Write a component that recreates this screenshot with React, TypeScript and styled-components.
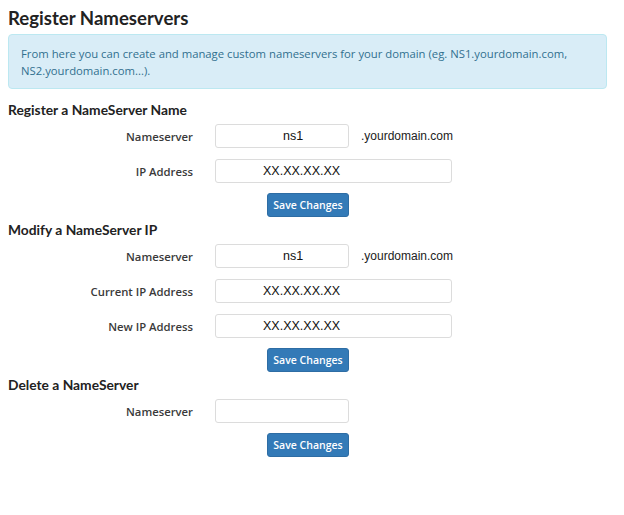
import styled, { createGlobalStyle } from "styled-components";

const GlobalStyle = createGlobalStyle`
  body {
    margin: 0;
    background: #fff;
    font-family: 'Open Sans', sans-serif;
  }
`;

const Page = styled.div`
  padding: 8px 17px 40px 8px;
`;

const Title = styled.h2`
  font-family: 'Lato', sans-serif;
  font-weight: 700;
  font-size: 18.6px;
  line-height: 20px;
  color: #222;
  margin: 0 0 6px;
`;

const Alert = styled.div`
  background: #d9edf7;
  border: 1px solid #bce8f1;
  border-radius: 4px;
  color: #31708f;
  font-size: 11.3px;
  line-height: 17px;
  padding: 10px 12px 9px;
`;

const Section = styled.section`
  margin-top: 13px;
  display: flex;
  flex-direction: column;
  gap: 11px;

  & + & {
    margin-top: 5px;
  }
`;

const SectionTitle = styled.h3`
  font-family: 'Lato', sans-serif;
  font-weight: 700;
  font-size: 13.8px;
  line-height: 16px;
  color: #222;
  margin: 0 0 -5px;
`;

const Row = styled.div`
  display: grid;
  grid-template-columns: 185px auto auto;
  column-gap: 22px;
  align-items: center;
  justify-content: start;
`;

const Label = styled.label`
  text-align: right;
  font-size: 11.3px;
  font-weight: 600;
  color: #3a3a3a;
`;

const Input = styled.input<{ $wide?: boolean; $indent: number }>`
  box-sizing: border-box;
  width: ${({ $wide }) => ($wide ? "237px" : "134px")};
  height: 24px;
  border: 1px solid #dcdcdc;
  border-radius: 3px;
  padding: 0 0 0 ${({ $indent }) => $indent}px;
  font-family: 'Liberation Sans', Arial, sans-serif;
  font-size: 12.5px;
  color: #111;
  background: #fff;
  outline: none;
`;

const Suffix = styled.span`
  font-family: 'Liberation Sans', Arial, sans-serif;
  font-size: 12px;
  color: #222;
  margin-left: -10px;
`;

const ButtonRow = styled.div`
  padding-left: 259px;
  margin-top: -2px;
`;

const Button = styled.button`
  box-sizing: border-box;
  width: 82px;
  height: 24px;
  background: #337ab7;
  border: 1px solid #2e6da4;
  border-radius: 3px;
  color: #fff;
  font-family: 'Open Sans', sans-serif;
  font-weight: 600;
  font-size: 10.5px;
  padding: 0;
  cursor: pointer;
`;

type Field = { label: string; value: string; wide?: boolean; suffix?: boolean };

const sections: { title: string; fields: Field[] }[] = [
  {
    title: "Register a NameServer Name",
    fields: [
      { label: "Nameserver", value: "ns1", suffix: true },
      { label: "IP Address", value: "XX.XX.XX.XX", wide: true },
    ],
  },
  {
    title: "Modify a NameServer IP",
    fields: [
      { label: "Nameserver", value: "ns1", suffix: true },
      { label: "Current IP Address", value: "XX.XX.XX.XX", wide: true },
      { label: "New IP Address", value: "XX.XX.XX.XX", wide: true },
    ],
  },
  {
    title: "Delete a NameServer",
    fields: [{ label: "Nameserver", value: "" }],
  },
];

export default function App() {
  return (
    <Page>
      <GlobalStyle />
      <Title>Register Nameservers</Title>
      <Alert>
        From here you can create and manage custom nameservers for your domain (eg. NS1.yourdomain.com,
        NS2.yourdomain.com...).
      </Alert>

      {sections.map((s) => (
        <Section key={s.title}>
          <SectionTitle>{s.title}</SectionTitle>
          {s.fields.map((f) => (
            <Row key={f.label}>
              <Label>{f.label}</Label>
              <Input
                $wide={f.wide}
                $indent={f.wide ? 47 : 67}
                defaultValue={f.value}
              />
              {f.suffix && <Suffix>.yourdomain.com</Suffix>}
            </Row>
          ))}
          <ButtonRow>
            <Button>Save Changes</Button>
          </ButtonRow>
        </Section>
      ))}
    </Page>
  );
}
